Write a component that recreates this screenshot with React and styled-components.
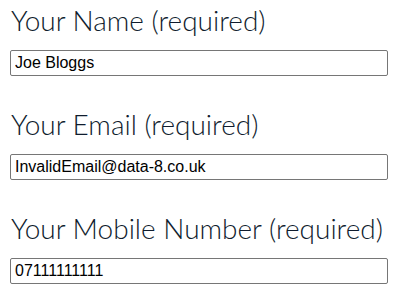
import React from "react";
import styled, { createGlobalStyle } from "styled-components";

const Global = createGlobalStyle`
  html, body { margin: 0; padding: 0; background: #fff; }
  body { padding: 0 10px; }
`;

const Form = styled.form`
  display: flex;
  flex-direction: column;
  gap: 32px;
  width: 378px;
  padding-top: 4px;
`;

const Field = styled.div`
  display: flex;
  flex-direction: column;
`;

const Label = styled.label`
  font-family: Lato, sans-serif;
  font-weight: 300;
  font-size: 28px;
  line-height: 32px;
  color: #0f1c2e;
  margin-bottom: 14px;
  padding-left: 1px;
  white-space: nowrap;
`;

const Input = styled.input`
  box-sizing: border-box;
  width: 378px;
  height: 26px;
  margin: 0;
  padding: 0 4px;
  border: 1px solid #767676;
  border-radius: 2px;
  font-family: "Liberation Sans", Arial, sans-serif;
  font-size: 16px;
  color: #000;
  background: #fff;
  outline: none;
`;

const fields = [
  { id: "name", label: "Your Name (required)", value: "Joe Bloggs" },
  { id: "email", label: "Your Email (required)", value: "InvalidEmail@data-8.co.uk" },
  { id: "mobile", label: "Your Mobile Number (required)", value: "07111111111" },
];

export default function App() {
  return (
    <>
      <Global />
      <Form>
        {fields.map((f) => (
          <Field key={f.id}>
            <Label htmlFor={f.id}>{f.label}</Label>
            <Input id={f.id} defaultValue={f.value} />
          </Field>
        ))}
      </Form>
    </>
  );
}
